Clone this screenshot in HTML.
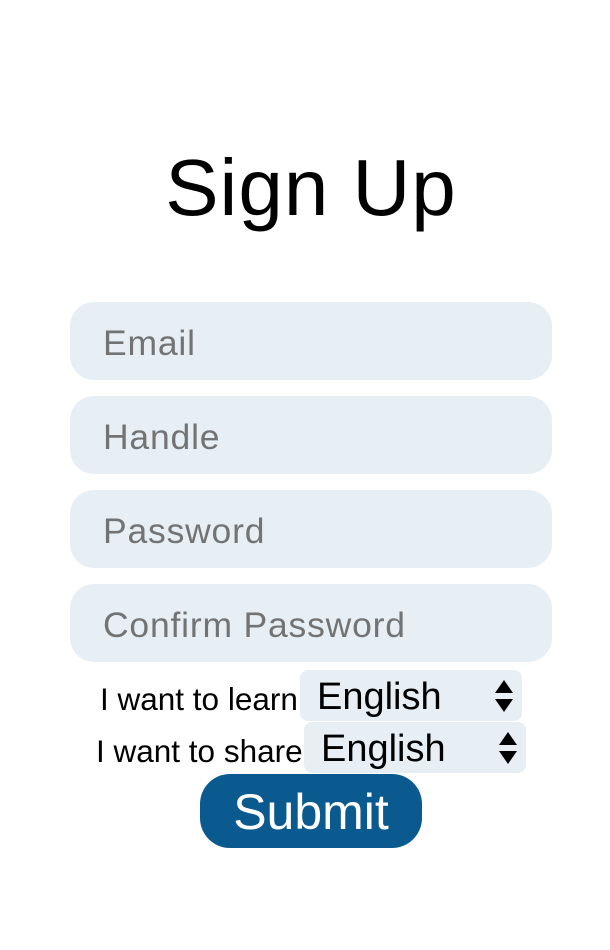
<!DOCTYPE html>
<html><head><style>
body{margin:0;width:610px;height:950px;background:#fff;font-family:"Liberation Sans",sans-serif;position:relative;overflow:hidden}
.a{position:absolute}
h1{position:absolute;left:0;width:622px;text-align:center;top:142px;margin:0;font-weight:normal;font-size:80px;color:#000;letter-spacing:1px}
.in{left:70px;width:482px;height:78px;background:#e7eff5;border-radius:24px;color:#737373;font-size:35.5px;line-height:82px;padding-left:33px;box-sizing:border-box;letter-spacing:0.8px}
.sel{height:51px;width:222px;background:#e7eff5;border-radius:8px;font-size:38px;line-height:54px;padding-left:17px;box-sizing:border-box;color:#000}
.lab{font-size:31.5px;color:#000;line-height:58px}
.arr{position:absolute;right:8px;top:8px}
</style></head><body>
<h1>Sign Up</h1>
<div class="a in" style="top:302px">Email</div>
<div class="a in" style="top:396px">Handle</div>
<div class="a in" style="top:490px">Password</div>
<div class="a in" style="top:584px">Confirm Password</div>
<div class="a lab" style="left:100px;top:670px">I want to learn</div>
<div class="a sel" style="left:300px;top:670px">English<svg class="arr" width="20" height="36" viewBox="0 0 20 36"><path d="M10 2L19 15H1Z M1 21H19L10 34Z" fill="#000"/></svg></div>
<div class="a lab" style="left:96px;top:722px">I want to share</div>
<div class="a sel" style="left:304px;top:722px">English<svg class="arr" width="20" height="36" viewBox="0 0 20 36"><path d="M10 2L19 15H1Z M1 21H19L10 34Z" fill="#000"/></svg></div>
<div class="a" style="left:200px;top:774px;width:222px;height:74px;background:#0b5a8f;border-radius:30px;color:#fff;font-size:50px;line-height:76px;text-align:center">Submit</div>
</body></html>
